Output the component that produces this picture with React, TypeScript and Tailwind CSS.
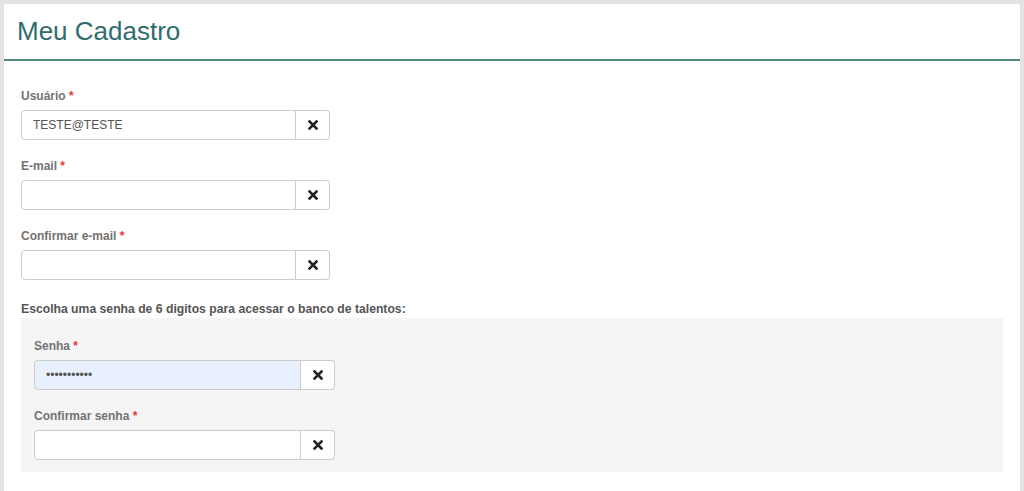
import React from "react";

function XIcon() {
  return (
    <svg width="10" height="10" viewBox="0 0 10 10" aria-hidden="true">
      <path
        d="M1.5 1.5 L8.5 8.5 M8.5 1.5 L1.5 8.5"
        stroke="#222"
        strokeWidth="2.6"
        strokeLinecap="square"
      />
    </svg>
  );
}

function Field({
  label,
  value,
  password,
  autofill,
}: {
  label: string;
  value?: string;
  password?: boolean;
  autofill?: boolean;
}) {
  return (
    <div>
      <label className="block text-[12px] leading-[17px] font-bold text-[#737373] mb-[5px]">
        {label} <span className="text-[#e33]">*</span>
      </label>
      <div className="flex h-[30px]">
        <input
          type={password ? "password" : "text"}
          defaultValue={value}
          readOnly
          className={
            "flex-1 min-w-0 h-full border border-[#ccc] rounded-l-[4px] px-[11px] text-[12px] text-[#555] outline-none " +
            (autofill ? "bg-[#e8f0fe]" : "bg-white")
          }
        />
        <button
          type="button"
          className="w-[34px] h-full flex items-center justify-center bg-white border border-l-0 border-[#ccc] rounded-r-[4px]"
        >
          <XIcon />
        </button>
      </div>
    </div>
  );
}

export default function App() {
  return (
    <div
      className="min-h-[491px] bg-[#e4e4e4] pt-[4px] px-[4px]"
      style={{ fontFamily: '"Liberation Sans", Arial, sans-serif' }}
    >
      <div className="bg-white rounded-tr-[3px] min-h-[487px]">
        <div className="pt-[12px] pb-[13px] px-[13px] border-b-2 border-[#4f8c7d]">
          <h1 className="text-[26px] leading-[30px] text-[#2f6d6c]">Meu Cadastro</h1>
        </div>
        <div className="px-[17px] pt-[27px]">
          <div className="w-[309px] flex flex-col gap-[18px]">
            <Field label="Usuário" value="TESTE@TESTE" />
            <Field label="E-mail" />
            <Field label="Confirmar e-mail" />
          </div>
          <h2 className="mt-[20px] text-[12.2px] leading-[18px] font-bold text-[#555]">
            Escolha uma senha de 6 digitos para acessar o banco de talentos:
          </h2>
          <div className="bg-[#f5f5f5] pt-[20px] pb-[12px] px-[13px]">
            <div className="w-[301px] flex flex-col gap-[18px]">
              <Field label="Senha" value="12345678901" password autofill />
              <Field label="Confirmar senha" />
            </div>
          </div>
        </div>
      </div>
    </div>
  );
}
